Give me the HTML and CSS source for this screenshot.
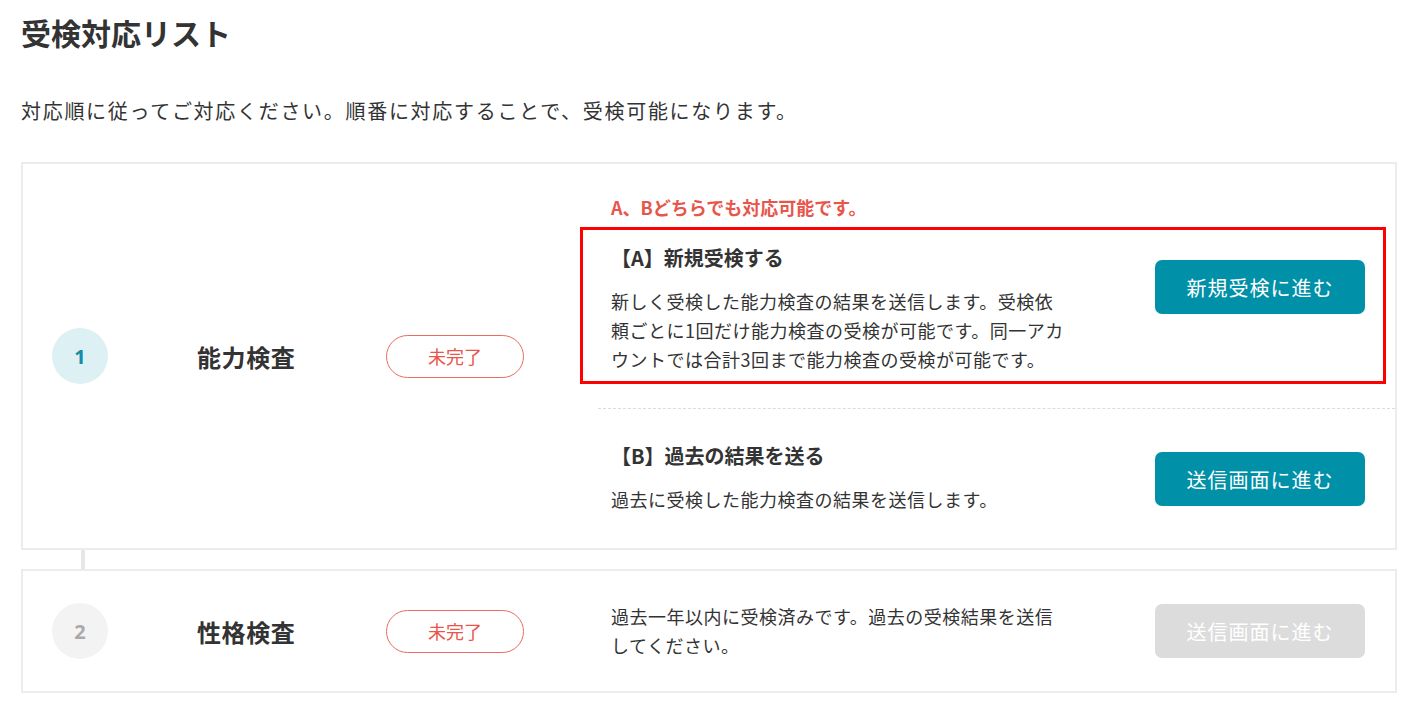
FILE: index.html
```html
<!DOCTYPE html>
<html lang="ja">
<head>
<meta charset="utf-8">
<title>受検対応リスト</title>
<link rel="stylesheet" href="styles.css">
</head>
<body>
<main class="page">
  <h1 class="page-title">受検対応リスト</h1>
  <p class="lead">対応順に従ってご対応ください。順番に対応することで、受検可能になります。</p>

  <section class="card card-first">
    <div class="left">
      <div class="step step-active">1</div>
      <div class="name">能力検査</div>
      <div class="badge">未完了</div>
    </div>
    <div class="right">
      <p class="note">A、Bどちらでも対応可能です。</p>
      <div class="option option-a">
        <div class="highlight"></div>
        <div class="option-text">
          <h2 class="option-title">【A】新規受検する</h2>
          <p class="desc">新しく受検した能力検査の結果を送信します。受検依頼ごとに1回だけ能力検査の受検が可能です。同一アカウントでは合計3回まで能力検査の受検が可能です。</p>
        </div>
        <button class="btn btn-a">新規受検に進む</button>
      </div>
      <div class="option option-b">
        <div class="option-text">
          <h2 class="option-title">【B】過去の結果を送る</h2>
          <p class="desc">過去に受検した能力検査の結果を送信します。</p>
        </div>
        <button class="btn btn-b">送信画面に進む</button>
      </div>
    </div>
  </section>

  <div class="connector"></div>

  <section class="card card-second">
    <div class="left">
      <div class="step step-idle">2</div>
      <div class="name">性格検査</div>
      <div class="badge">未完了</div>
    </div>
    <div class="right right-simple">
      <p class="desc desc-narrow">過去一年以内に受検済みです。過去の受検結果を送信してください。</p>
      <button class="btn btn-disabled" disabled>送信画面に進む</button>
    </div>
  </section>
</main>
</body>
</html>
```

FILE: styles.css
```css
* { box-sizing: border-box; }
html, body { margin: 0; padding: 0; background: #fff; }
body {
  font-family: "Noto Sans CJK JP", "Noto Sans", sans-serif;
  color: #333;
}
.page { padding: 11px 22px 0 21px; }
.page-title {
  margin: 0;
  font-size: 30px;
  line-height: 42px;
  font-weight: 700;
  color: #333;
}
.lead {
  margin: 43px 0 0 0;
  font-size: 20px;
  line-height: 30px;
  letter-spacing: 1.7px;
  color: #333;
}
.card {
  border: 2px solid #ececec;
  display: flex;
  align-items: center;
}
.card-first { margin-top: 36px; }
.left {
  display: flex;
  align-items: center;
  width: 575px;
  flex: none;
}
.step {
  width: 56px;
  height: 56px;
  border-radius: 50%;
  margin-left: 29px;
  display: flex;
  align-items: center;
  justify-content: center;
  font-family: "Noto Sans", sans-serif;
  font-weight: 700;
  font-size: 20px;
}
.step-active { background: #ddf0f4; color: #138ea6; }
.step-idle { background: #f3f3f3; color: #aaa; }
.name {
  margin-left: 89px;
  width: 189px;
  font-size: 24px;
  font-weight: 700;
  letter-spacing: 0.6px;
  color: #333;
}
.badge {
  width: 138px;
  height: 43px;
  border: 1.5px solid #e96b61;
  border-radius: 22px;
  color: #e8564b;
  font-size: 18px;
  display: flex;
  align-items: center;
  justify-content: center;
}
.right {
  flex: 1;
  padding: 30px 0 34px 0;
}
.note {
  margin: 0 0 0 13px;
  font-size: 18px;
  line-height: 26px;
  font-weight: 700;
  color: #e8564b;
}
.option {
  position: relative;
  display: flex;
  align-items: flex-start;
  justify-content: space-between;
  padding-left: 13px;
  padding-right: 30px;
}
.option-a {
  padding-top: 23px;
  padding-bottom: 34px;
  border-bottom: 1px dashed #dcdcdc;
}
.option-b {
  padding-top: 32px;
}
.highlight {
  position: absolute;
  left: -18px;
  right: 9px;
  top: 7px;
  bottom: 24px;
  border: 3px solid #ff0000;
  pointer-events: none;
}
.option-title {
  margin: 0;
  font-size: 20px;
  line-height: 30px;
  font-weight: 700;
  color: #333;
}
.desc {
  margin: 14px 0 0 0;
  width: 456px;
  font-size: 18px;
  line-height: 29px;
  letter-spacing: 0.5px;
  color: #333;
}
.btn {
  width: 210px;
  height: 54px;
  border: none;
  border-radius: 7px;
  background: #0090a7;
  color: #fff;
  font-family: "Noto Sans CJK JP", sans-serif;
  font-size: 20px;
  letter-spacing: 1px;
  flex: none;
}
.btn-a { margin-top: 17px; }
.btn-b { margin-top: 11px; }
.btn-disabled { background: #dcdcdc; color: #fff; }
.connector {
  width: 4px;
  height: 19px;
  background: #e6e6e6;
  margin-left: 60px;
}
.right-simple {
  display: flex;
  align-items: center;
  justify-content: space-between;
  padding: 31px 30px 31px 13px;
}
.desc-narrow { margin: 0; width: 460px; }
```
